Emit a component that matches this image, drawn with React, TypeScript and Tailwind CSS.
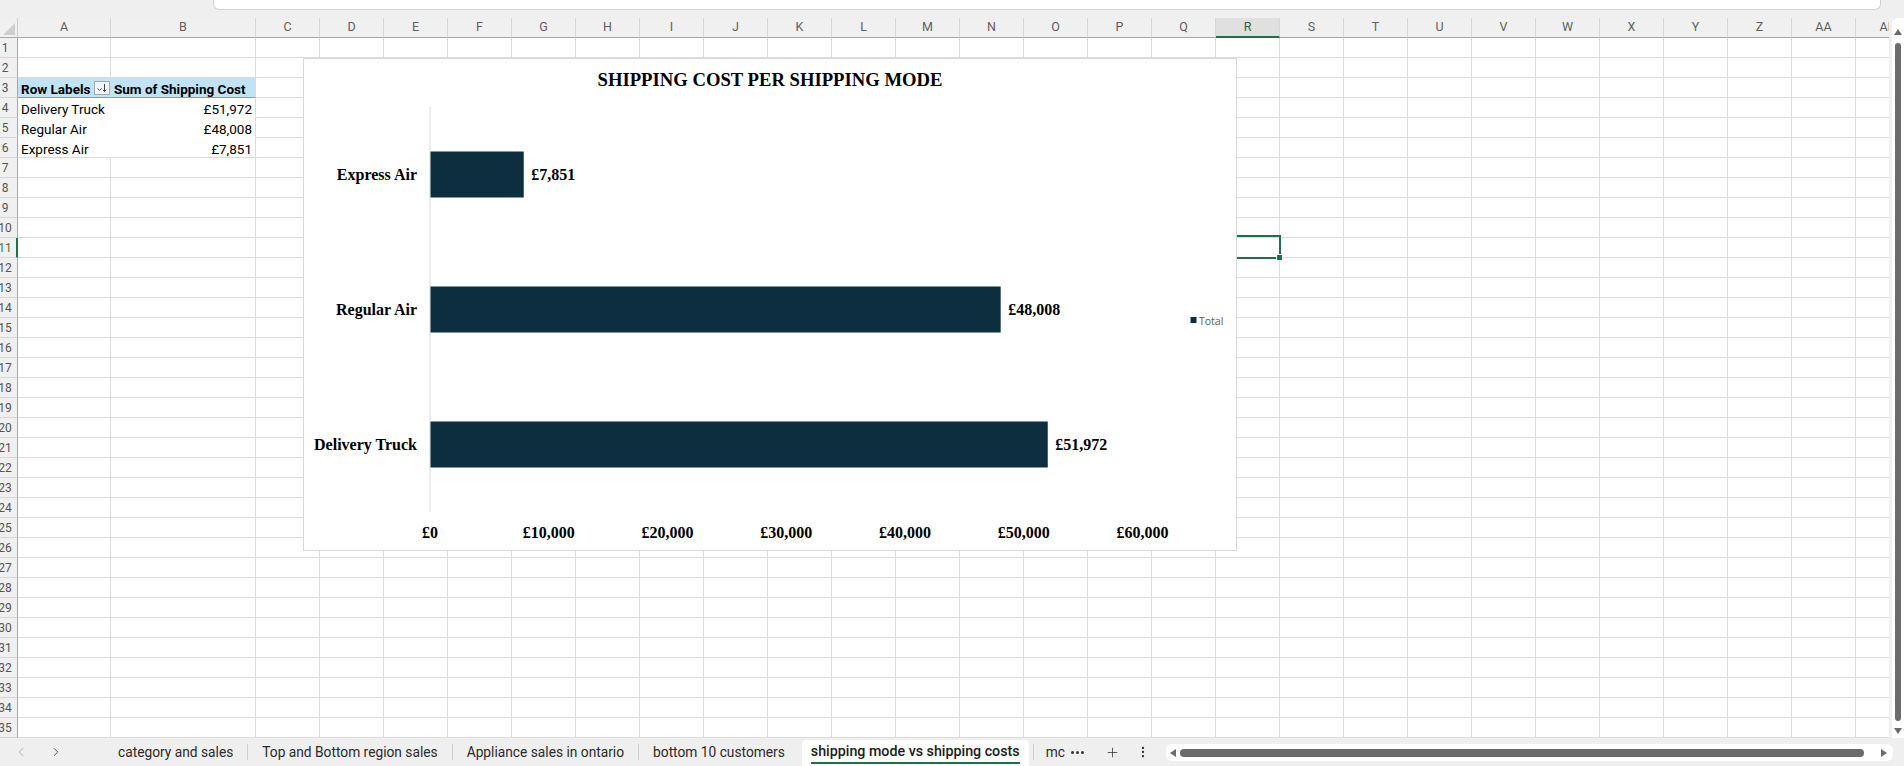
import React from "react";
import { ChevronLeft, ChevronRight, Plus, EllipsisVertical } from "lucide-react";

const COLS = [
  "A", "B", "C", "D", "E", "F", "G", "H", "I", "J", "K", "L", "M", "N",
  "O", "P", "Q", "R", "S", "T", "U", "V", "W", "X", "Y", "Z", "AA", "AB",
];
const ROW_COUNT = 35;
const SELECTED_COL = 17; // R
const SELECTED_ROW = 11;

const UI_FONT = { fontFamily: "Roboto, 'Liberation Sans', sans-serif" };

function colW(c: number) {
  if (c === 0) return "w-[93px]";
  if (c === 1) return "w-[145px]";
  return "w-[64px]";
}

interface ShipRow {
  mode: string;
  cost: number;
}

const pivot: ShipRow[] = [
  { mode: "Delivery Truck", cost: 51972 },
  { mode: "Regular Air", cost: 48008 },
  { mode: "Express Air", cost: 7851 },
];

function money(v: number) {
  return "£" + v.toLocaleString("en-GB");
}

function cellClass(r: number, c: number) {
  const base = "shrink-0 h-full border-r border-b overflow-hidden whitespace-nowrap flex items-end leading-[16px] " + colW(c);
  if (r === 3 && c <= 1) {
    return base + " bg-[#c0e4f5] border-b-[#5ea7d8] " + (c === 0 ? "border-r-[#c0e4f5]" : "border-r-[#dcdcdc]");
  }
  if ((r === 4 || r === 5) && c <= 1) {
    return base + " bg-white border-b-white " + (c === 0 ? "border-r-white" : "border-r-[#dcdcdc]");
  }
  if (r === 6 && c === 0) {
    return base + " bg-white border-r-white border-b-[#dcdcdc]";
  }
  return base + " border-[#dcdcdc]";
}

function SortButton() {
  return (
    <div className="w-[16px] h-[14px] mb-[2px] shrink-0 border border-[#a9a9a9] bg-[#eef6fb] flex items-center justify-center">
      <svg width="12" height="10" viewBox="0 0 12 10">
        <path d="M1.5 5.5 L3.5 7.5 L5.5 5.5" fill="none" stroke="#444" strokeWidth="1" />
        <path d="M8.5 1 V8.5 M6.8 6.8 L8.5 8.6 L10.2 6.8" fill="none" stroke="#444" strokeWidth="1" />
      </svg>
    </div>
  );
}

function CellContent({ r, c }: { r: number; c: number }) {
  if (r === 3 && c === 0) {
    return (
      <div className="flex w-full items-end justify-between pl-[3px] font-bold">
        <span>Row Labels</span>
        <SortButton />
      </div>
    );
  }
  if (r === 3 && c === 1) {
    return <span className="pl-[3px] font-bold">Sum of Shipping Cost</span>;
  }
  if (r >= 4 && r <= 6 && c <= 1) {
    const item = pivot[r - 4];
    if (c === 0) return <span className="pl-[3px]">{item.mode}</span>;
    return <span className="w-full text-right pr-[3px]">{money(item.cost)}</span>;
  }
  return null;
}

function Chart() {
  const k = 712.6 / 60000;
  const x0 = 126;
  const bars = [
    { label: "Express Air", value: 7851, cy: 115.5 },
    { label: "Regular Air", value: 48008, cy: 250.5 },
    { label: "Delivery Truck", value: 51972, cy: 385.5 },
  ];
  const ticks = [0, 10000, 20000, 30000, 40000, 50000, 60000];
  const serif = "'Liberation Serif', 'Times New Roman', serif";
  return (
    <div className="absolute left-[303px] top-[40px] w-[934px] h-[493px] bg-white border border-[#d9d9d9] z-20">
      <svg width="932" height="491" viewBox="0 0 932 491">
        <text x="466" y="27" textAnchor="middle" fontFamily={serif} fontWeight="bold" fontSize="18.67" fill="#000">
          SHIPPING COST PER SHIPPING MODE
        </text>
        <line x1={x0} y1="48" x2={x0} y2="453" stroke="#d9d9d9" strokeWidth="1" />
        {bars.map((b) => {
          const w = b.value * k;
          return (
            <g key={b.label}>
              <rect x={x0 + 0.5} y={b.cy - 23} width={w} height="46" fill="#0d2e3f" />
              <text x="113" y={b.cy + 5.5} textAnchor="end" fontFamily={serif} fontWeight="bold" fontSize="16" fill="#000">
                {b.label}
              </text>
              <text x={x0 + w + 8} y={b.cy + 5.5} fontFamily={serif} fontWeight="bold" fontSize="16" fill="#000">
                {money(b.value)}
              </text>
            </g>
          );
        })}
        {ticks.map((t) => (
          <text key={t} x={x0 + t * k} y="479" textAnchor="middle" fontFamily={serif} fontWeight="bold" fontSize="16" fill="#000">
            {money(t)}
          </text>
        ))}
        <rect x="886.5" y="258" width="6" height="6" fill="#0d2e3f" />
        <text x="895" y="265.5" fontFamily="'Open Sans', 'Liberation Sans', sans-serif" fontSize="10.5" fill="#595959">
          Total
        </text>
      </svg>
    </div>
  );
}

function Grid() {
  return (
    <div className="relative w-[1889px] h-[720px] overflow-hidden bg-white" style={UI_FONT}>
      {/* column headers */}
      <div className="flex h-[20px] bg-[#f0f0f0]">
        <div className="w-[18px] shrink-0 h-full border-r border-b border-r-[#d0d0d0] border-b-[#a8a8a8] relative">
          <svg className="absolute right-[2px] bottom-[2px]" width="12" height="12" viewBox="0 0 12 12">
            <path d="M12 0 L12 12 L0 12 Z" fill="#cfcfcf" />
          </svg>
        </div>
        {COLS.map((name, c) => (
          <div
            key={name}
            className={
              "shrink-0 h-full flex items-center justify-center text-[12.5px] border-r border-r-[#d6d6d6] " +
              colW(c) +
              (c === SELECTED_COL
                ? " bg-[#e0e0e0] text-[#1e6b41] border-b-2 border-b-[#1e7145]"
                : " text-[#5f5f5f] border-b border-b-[#a8a8a8]")
            }
          >
            {name}
          </div>
        ))}
      </div>
      {/* rows */}
      {Array.from({ length: ROW_COUNT }, (_, i) => i + 1).map((r) => (
        <div key={r} className="flex h-[20px] text-[13.5px] text-black">
          <div
            className={
              "w-[18px] shrink-0 h-full overflow-hidden flex items-center bg-[#f0f0f0] border-b border-b-[#d6d6d6] " +
              (r === SELECTED_ROW ? "border-r-2 border-r-[#1e7145] text-[#4d7a2f] bg-[#e4e4e4]" : "border-r border-r-[#a8a8a8] text-[#555]")
            }
          >
            <span className="w-[24px] -ml-[7px] shrink-0 text-center text-[12px]">{r}</span>
          </div>
          {COLS.map((name, c) => (
            <div key={name} className={cellClass(r, c)}>
              <CellContent r={r} c={c} />
            </div>
          ))}
        </div>
      ))}
      {/* active cell R11 */}
      <div className="absolute left-[1215px] top-[217px] w-[66px] h-[24px] border-2 border-[#1e7145] z-10" />
      <div className="absolute left-[1277px] top-[237px] w-[5px] h-[5px] bg-[#1e7145] outline outline-1 outline-white z-10" />
      <Chart />
    </div>
  );
}

function VScroll() {
  return (
    <div className="w-[15px] h-[720px] bg-[#f0f0f0] flex justify-end">
      <div className="w-[12px] h-full bg-white rounded-tl-[6px] flex flex-col items-center pt-[11px]">
        <svg width="8" height="6" viewBox="0 0 8 6">
          <path d="M4 0 L8 6 L0 6 Z" fill="#6b6b6b" />
        </svg>
        <div className="w-[6px] h-[678px] mt-[8px] rounded-full bg-[#6b6b6b]" />
        <svg className="mt-[7px]" width="8" height="6" viewBox="0 0 8 6">
          <path d="M0 0 L8 0 L4 6 Z" fill="#6b6b6b" />
        </svg>
      </div>
    </div>
  );
}

function Sep() {
  return <div className="w-px h-[16px] bg-[#cdcdcd] shrink-0" />;
}

function TabBar() {
  const tabs = ["category and sales", "Top and Bottom region sales", "Appliance sales in ontario", "bottom 10 customers"];
  return (
    <div className="h-[28px] flex items-stretch bg-[#efefef] text-[13.75px] text-[#2b2b2b]" style={UI_FONT}>
      <div className="w-[104px] shrink-0 flex items-center pl-[14px]">
        <ChevronLeft size={14} strokeWidth={1.5} className="text-[#a3a3a3]" />
        <ChevronRight size={14} strokeWidth={1.5} className="ml-[21px] text-[#3c3c3c]" />
      </div>
      <div className="w-[962px] shrink-0 flex items-center overflow-hidden whitespace-nowrap">
        {tabs.map((t, i) => (
          <React.Fragment key={t}>
            <div className="shrink-0 px-[14px]">{t}</div>
            {i < tabs.length - 1 && <Sep />}
          </React.Fragment>
        ))}
        <div className="ml-[3px] self-end h-[26px] shrink-0 bg-white rounded-t-[4px] px-[9px] flex flex-col justify-center">
          <span className="font-medium text-[14.25px] text-[#1b1b1b] leading-[16px] -mt-[3px]">shipping mode vs shipping costs</span>
          <div className="h-[2px] bg-[#1e7145] mt-[3px] -mb-[3px]" />
        </div>
        <div className="ml-[4px]">
          <Sep />
        </div>
        <div className="pl-[12px] shrink-0">mc</div>
      </div>
      <div className="w-[22px] shrink-0 flex items-center justify-center gap-[2px]">
        <div className="w-[3px] h-[3px] rounded-full bg-[#333]" />
        <div className="w-[3px] h-[3px] rounded-full bg-[#333]" />
        <div className="w-[3px] h-[3px] rounded-full bg-[#333]" />
      </div>
      <div className="ml-[12px] w-[24px] shrink-0 flex items-center justify-center">
        <Plus size={15} strokeWidth={1.25} className="text-[#333]" />
      </div>
      <div className="ml-[7px] w-[24px] shrink-0 flex items-center justify-center">
        <EllipsisVertical size={14} strokeWidth={2} className="text-[#333]" />
      </div>
      <div className="ml-[11px] w-[727px] shrink-0 mt-[6px] h-[17px] bg-white rounded-[6px] flex items-center px-[4px]">
        <svg width="6" height="8" viewBox="0 0 6 8">
          <path d="M6 0 L6 8 L0 4 Z" fill="#6b6b6b" />
        </svg>
        <div className="ml-[4px] w-[684px] h-[8px] rounded-full bg-[#6b6b6b]" />
        <svg className="ml-[17px]" width="6" height="8" viewBox="0 0 6 8">
          <path d="M0 0 L6 4 L0 8 Z" fill="#6b6b6b" />
        </svg>
      </div>
    </div>
  );
}

export default function App() {
  return (
    <div className="w-[1904px] h-[766px] overflow-hidden bg-[#efefef] flex flex-col">
      <div className="h-[18px] shrink-0">
        <div className="ml-[213px] w-[1668px] h-[10px] bg-white border border-t-0 border-[#d2d2d2] rounded-b-[6px]" />
      </div>
      <div className="flex h-[720px] shrink-0">
        <Grid />
        <VScroll />
      </div>
      <TabBar />
    </div>
  );
}
